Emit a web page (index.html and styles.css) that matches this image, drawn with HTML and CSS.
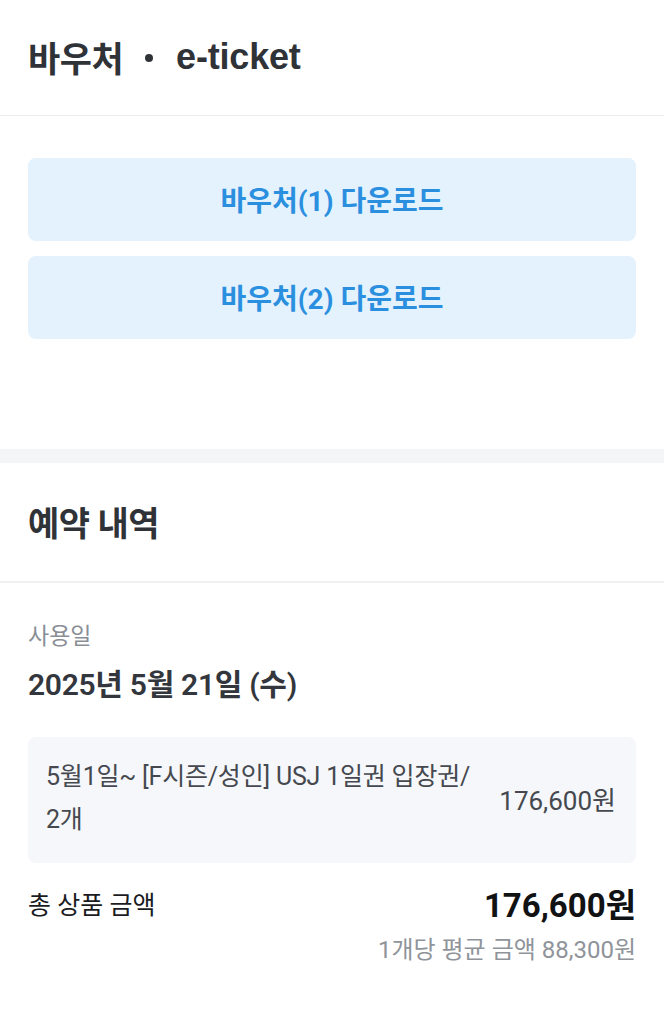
FILE: index.html
```html
<!DOCTYPE html>
<html lang="ko">

<head>
  <meta charset="UTF-8">
  <meta name="viewport" content="width=device-width, initial-scale=1.0">
  <title>바우처 · e-ticket</title>
  <link rel="stylesheet" href="styles.css">
</head>

<body>
  <div class="page">
    <header class="section-head">
      <h1 class="title">바우처<span class="dot"></span><span class="latin">e-ticket</span></h1>
    </header>

    <div class="voucher-list">
      <button class="voucher-btn">바우처(1) 다운로드</button>
      <button class="voucher-btn">바우처(2) 다운로드</button>
    </div>

    <div class="band"></div>

    <header class="section-head booking-head">
      <h2 class="title">예약 내역</h2>
    </header>

    <div class="booking">
      <div class="label">사용일</div>
      <div class="date">2025년 5월 21일 (수)</div>

      <div class="item-card">
        <div class="item-name">5월1일~ [F시즌/성인] USJ 1일권 입장권/<br>2개</div>
        <div class="item-price">176,600원</div>
      </div>

      <div class="total-row">
        <div class="total-label">총 상품 금액</div>
        <div class="total-amount">176,600원</div>
      </div>
      <div class="avg">1개당 평균 금액 88,300원</div>
    </div>
  </div>
</body>

</html>
```

FILE: styles.css
```css
body {
  margin: 0;
  background-color: #ffffff;
  font-family: Roboto, "Noto Sans CJK KR", sans-serif;
  color: #33373d;
}

.page {
  width: 664px;
}

.section-head {
  height: 116px;
  border-bottom: 1px solid #e9ecef;
  display: flex;
  align-items: center;
  padding: 0 28px 2px;
  box-sizing: border-box;
}

.title {
  margin: 0;
  font-size: 35px;
  font-weight: 700;
  color: #2f3338;
  letter-spacing: -0.5px;
  display: flex;
  align-items: center;
}

.latin {
  font-family: "Liberation Sans", "Noto Sans CJK KR", sans-serif;
  font-size: 36px;
  letter-spacing: -0.2px;
}

.dot {
  width: 8px;
  height: 8px;
  border-radius: 50%;
  background-color: #2f3338;
  margin: 2px 23px 0 22px;
}

.voucher-list {
  padding: 42px 28px 110px;
  display: flex;
  flex-direction: column;
  gap: 15px;
}

.voucher-btn {
  height: 83px;
  border: none;
  border-radius: 8px;
  background-color: #e4f2fd;
  color: #2b8fe0;
  font-family: Roboto, "Noto Sans CJK KR", sans-serif;
  font-size: 28px;
  font-weight: 700;
  padding: 0 0 2px;
  cursor: pointer;
}

.band {
  height: 14px;
  background-color: #f4f5f7;
}

.booking-head {
  height: 120px;
  border-bottom: 2px solid #eef0f2;
  padding-bottom: 2px;
}

.booking-head .title {
  font-size: 34px;
}

.booking {
  padding: 39px 28px 40px;
}

.label {
  font-size: 23px;
  color: #8a8f96;
  line-height: 30px;
}

.date {
  margin-top: 13px;
  font-size: 30px;
  font-weight: 600;
  line-height: 40px;
  letter-spacing: -0.3px;
}

.item-card {
  margin-top: 32px;
  background-color: #f5f7fa;
  border-radius: 8px;
  padding: 18px 20px 22px 18px;
  display: flex;
  align-items: center;
  justify-content: space-between;
}

.item-name {
  font-size: 25px;
  line-height: 43px;
  color: #45494f;
  letter-spacing: -0.2px;
}

.item-price {
  flex-shrink: 0;
  font-size: 26px;
  color: #45494f;
}

.total-row {
  margin-top: 23px;
  display: flex;
  justify-content: space-between;
  align-items: center;
  line-height: 40px;
}

.total-label {
  font-size: 25px;
  color: #1a1c1f;
}

.total-amount {
  font-size: 33px;
  font-weight: 700;
  color: #111214;
}

.avg {
  margin-top: 9px;
  text-align: right;
  font-size: 24px;
  line-height: 30px;
  color: #8f949a;
}
```
